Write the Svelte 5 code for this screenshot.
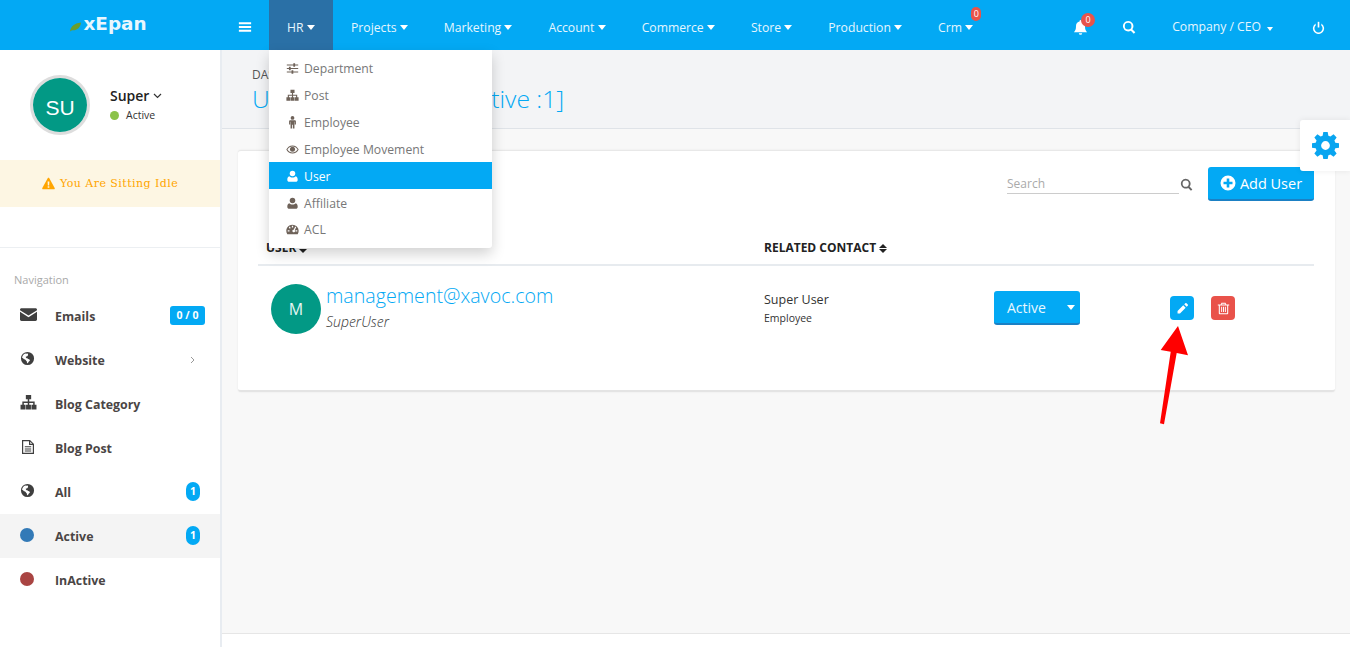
<script>
	const navItems = [
		{ label: 'HR', open: true },
		{ label: 'Projects' },
		{ label: 'Marketing' },
		{ label: 'Account' },
		{ label: 'Commerce' },
		{ label: 'Store' },
		{ label: 'Production' },
		{ label: 'Crm', badge: '0' }
	];

	const hrMenu = [
		{ label: 'Department', icon: 'sliders' },
		{ label: 'Post', icon: 'sitemap' },
		{ label: 'Employee', icon: 'male' },
		{ label: 'Employee Movement', icon: 'eye' },
		{ label: 'User', icon: 'user', active: true },
		{ label: 'Affiliate', icon: 'user' },
		{ label: 'ACL', icon: 'dashboard' }
	];

	const sideItems = [
		{ label: 'Emails', icon: 'mail', size: 17, pill: '0 / 0' },
		{ label: 'Website', icon: 'globe', size: 15, chevron: true },
		{ label: 'Blog Category', icon: 'sitemap', size: 17 },
		{ label: 'Blog Post', icon: 'file', size: 16 },
		{ label: 'All', icon: 'globe', size: 15, count: 1 },
		{ label: 'Active', dot: '#337ab7', count: 1, current: true },
		{ label: 'InActive', dot: '#a94442' }
	];
</script>

{#snippet icon(name, size = 14)}
	<svg class="ico" width={size} height={size} viewBox="0 0 16 16" fill="currentColor" aria-hidden="true">
		{#if name === 'sliders'}
			<path d="M1 3h14v1.400H1zM1 7.300h14v1.400H1zM1 11.600h14V13H1z" />
			<path d="M9 1.600h2.200v4.200H9zM3.600 5.900h2.200v4.200H3.600zM6.800 10.200H9v4.200H6.800z" />
		{:else if name === 'sitemap'}
			<path d="M5.500 1h5v4H8.700v2h5.100v3.200h1.700v4.300H10.800v-4.300h1.600V8.400H8.700v1.800h1.600v4.300H5.700v-4.300h1.600V8.400H3.600v1.800h1.600v4.300H.5v-4.300h1.700V7h5.100V5H5.500z" />
		{:else if name === 'male'}
			<circle cx="8" cy="2.400" r="2.300" />
			<path d="M5.300 5.200h5.400c.9 0 1.500.6 1.500 1.400v4h-1.400V7.200h-.4V15.500H8.500V10.800h-1V15.500H5.600V7.200h-.4v3.400H3.800v-4c0-.8.6-1.400 1.500-1.400z" />
		{:else if name === 'eye'}
			<path fill-rule="evenodd" d="M8 3c3.400 0 6 2 7.600 5-1.600 3-4.200 5-7.600 5S2 11 .4 8C2 5 4.600 3 8 3zm0 1.200C5.400 4.200 3.200 5.700 1.800 8c1.400 2.300 3.600 3.800 6.200 3.800s4.800-1.500 6.200-3.800C12.800 5.700 10.600 4.200 8 4.200z" />
			<circle cx="8" cy="7.600" r="3.100" />
		{:else if name === 'user'}
			<circle cx="8" cy="4.400" r="3.400" />
			<path d="M4 7.700c1 1 2.400 1.500 4 1.500s3-.5 4-1.500c1.600.3 2.400 2 2.400 4.300 0 1.700-1 2.500-2.400 2.500H4c-1.400 0-2.400-.8-2.400-2.500 0-2.300.8-4 2.400-4.300z" />
		{:else if name === 'dashboard'}
			<path fill-rule="evenodd" d="M8 2a7.600 7.600 0 0 1 7.600 7.600c0 1.500-.4 2.900-1.200 4.100H1.600A7.600 7.600 0 0 1 8 2zM7.200 3.400v2.200h1.600V3.400zM3.500 5.200 4.600 7l1.200-.9-1.200-1.700zm9 0-1.100-.8-1.900 3.800a1.600 1.600 0 1 0 1.300.7zM2.100 9v1.500h2.200V9zm9.600 0v1.500h2.200V9z" />
		{:else if name === 'mail'}
			<path d="M0 3.400C0 2.600.6 2 1.400 2h13.200c.8 0 1.400.6 1.400 1.400v.5L8 9 0 3.900z" />
			<path d="M0 5.500v7.100c0 .8.6 1.400 1.400 1.400h13.200c.8 0 1.400-.6 1.400-1.400V5.500L8 10.600z" />
		{:else if name === 'globe'}
			<path fill-rule="evenodd" d="M8 1a7 7 0 1 1 0 14A7 7 0 0 1 8 1zM5.400 2.700C3.600 3.600 2.400 5.300 2.200 7.300c.8.300 1.400.8 2 1.400.7.200 1.600.2 1.800 1 .2.700.8 1 1.300 1.500.3.500 0 1.400.2 2 .9-.2 1.500-1.200 2-2 .4-.4 1-.7 1-1.400 0-.7-.9-.8-1.500-1.200-.6-.3-1.200-1.100-2-.9-.6-.5-1-1-.7-1.800.6-.2 1.300-.3 1.800-.7.2-.6.8-1.300.4-2.100-.3-.4-1.100-.5-1.500-.3z" />
		{:else if name === 'file'}
			<path fill-rule="evenodd" d="M2 1h8l4 4v10H2zM3.200 2.200v11.600h9.600V6H9V2.200zM10.200 2.700v2.100h2.100zM4.800 7.200h6.400v1H4.800zm0 2.200h6.400v1H4.800zm0 2.200h6.400v1H4.800z" />
		{:else if name === 'search'}
			<path fill-rule="evenodd" d="M7 1a6 6 0 0 1 4.800 9.600l3.400 3.400-1.700 1.700-3.400-3.500A6 6 0 1 1 7 1zm0 2.200a3.800 3.800 0 1 0 0 7.600 3.800 3.800 0 0 0 0-7.600z" />
		{:else if name === 'bell'}
			<path d="M8 0c.6 0 1 .4 1 1v.7c2.300.4 3.800 2.300 3.800 4.700 0 3.500.7 5 2.200 6.600H1c1.500-1.600 2.200-3.100 2.200-6.600C3.200 4 4.700 2.100 7 1.700V1c0-.6.4-1 1-1zM6.200 14h3.600a1.800 1.800 0 0 1-3.600 0z" />
		{:else if name === 'power'}
			<path d="M7 1h2v7H7z" />
			<path d="M4.500 3.200v2.300a5 5 0 1 0 7 0V3.200a6.900 6.900 0 1 1-7 0z" />
		{:else if name === 'bars'}
			<path d="M1 2.500h14v2.400H1zM1 6.800h14v2.400H1zM1 11.100h14v2.400H1z" />
		{:else if name === 'warning'}
			<path fill-rule="evenodd" d="M8 1c.4 0 .8.200 1 .6l6.600 11.800c.4.800-.1 1.600-1 1.600H1.400c-.9 0-1.400-.8-1-1.600L7 1.600c.2-.4.600-.6 1-.6zM6.900 5.400l.3 5h1.600l.3-5zM7 11.400v1.800h2v-1.800z" />
		{:else if name === 'plus'}
			<path fill-rule="evenodd" d="M8 .5a7.500 7.500 0 1 1 0 15 7.500 7.500 0 0 1 0-15zM6.700 3.500v3.200H3.500v2.600h3.200v3.200h2.600V9.300h3.200V6.700H9.300V3.500z" />
		{:else if name === 'pencil'}
			<path d="M11.500 1.500c.4-.4 1-.4 1.400 0l1.600 1.600c.4.400.4 1 0 1.400l-1.400 1.400-3-3zM8.900 4.100l3 3-7 7H1.900v-3z" />
		{:else if name === 'trash'}
			<path fill-rule="evenodd" d="M5.500 1h5l.9 2H15v1.300h-1.200V14c0 .6-.5 1-1 1H3.200c-.5 0-1-.4-1-1V4.300H1V3h3.600zM6.100 2.200 5.800 3h4.400l-.3-.8zM3.500 4.300v9.400h9V4.300zM5.100 5.800h1.200v6.400H5.100zm2.300 0h1.200v6.400H7.400zm2.300 0h1.200v6.400H9.700z" />
		{:else if name === 'gear'}
			<path fill-rule="evenodd" d="M6.700 0h2.600l.4 2.200 1.200.5L12.800 1.400l1.800 1.800-1.300 1.900.5 1.200 2.200.4v2.600l-2.200.4-.5 1.200 1.300 1.900-1.800 1.800-1.900-1.300-1.200.5-.4 2.200H6.700l-.4-2.200-1.200-.5-1.900 1.300-1.800-1.800 1.300-1.900-.5-1.200L0 9.300V6.700l2.200-.4.500-1.200L1.400 3.200l1.800-1.800 1.900 1.300 1.200-.5zM8 5.400a2.600 2.600 0 1 0 0 5.200 2.600 2.600 0 0 0 0-5.200z" />
		{/if}
	</svg>
{/snippet}

<div class="page">
	<header class="topbar">
		<div class="logo">
			<svg class="leaf" width="13" height="10" viewBox="0 0 13 11" aria-hidden="true">
				<path d="M.5 10.500C1 5 5 1.500 12.500.5 12 6 8 9.500 3 9 2 9.300 1.200 9.900.5 10.500z" fill="#6a9e2c" />
			</svg>
			<span>xEpan</span>
		</div>
		<button class="burger">{@render icon('bars', 14)}</button>
		<nav class="mainnav">
			{#each navItems as item}
				<div class="navitem" class:open={item.open}>
					{item.label}<span class="caret"></span>
					{#if item.badge}<span class="crm-badge">{item.badge}</span>{/if}
					{#if item.open}
						<div class="dropdown">
							{#each hrMenu as m}
								<div class="dd-row" class:active={m.active}>
									<span class="dd-icon">{@render icon(m.icon, 13)}</span>
									{m.label}
								</div>
							{/each}
						</div>
					{/if}
				</div>
			{/each}
		</nav>
		<div class="topright">
			<div class="bell">{@render icon('bell', 15)}<span class="bell-badge">0</span></div>
			<div class="tsearch">{@render icon('search', 14)}</div>
			<div class="company">Company / CEO<span class="caret small"></span></div>
			<div class="power">{@render icon('power', 13)}</div>
		</div>
	</header>

	<div class="body">
		<aside class="sidebar">
			<div class="profile">
				<div class="avatar-ring"><div class="avatar">SU</div></div>
				<div class="who">
					<div class="name">
						Super
						<svg width="9" height="6" viewBox="0 0 9 6" fill="none" stroke="#333" stroke-width="1.2"><path d="M1 1l3.500 3.500L8 1" /></svg>
					</div>
					<div class="status"><span class="green"></span>Active</div>
				</div>
			</div>
			<div class="idle">{@render icon('warning', 13)}<span>You Are Sitting Idle</span></div>
			<div class="side-list">
				<div class="side-title">Navigation</div>
				{#each sideItems as s}
					<div class="side-row" class:current={s.current}>
						<span class="side-icon">
							{#if s.dot}
								<span class="dot" style="background:{s.dot}"></span>
							{:else}
								{@render icon(s.icon, s.size)}
							{/if}
						</span>
						<span class="side-label">{s.label}</span>
						{#if s.pill}<span class="pill">{s.pill}</span>{/if}
						{#if s.count}<span class="count">{s.count}</span>{/if}
						{#if s.chevron}
							<svg class="chev" width="5" height="8" viewBox="0 0 5 8" fill="none" stroke="#999" stroke-width="1"><path d="M1 1l3 3-3 3" /></svg>
						{/if}
					</div>
				{/each}
			</div>
		</aside>

		<main class="main">
			<div class="pagehead">
				<div class="crumb">DASHBOARD</div>
				<h1>Users [All Users :1, Active :1]</h1>
			</div>
			<div class="content">
				<section class="card">
					<div class="tools">
						<div class="searchbox">
							<span class="search-field">Search</span>
							<span class="search-ico">{@render icon('search', 13)}</span>
						</div>
						<button class="add">{@render icon('plus', 16)}Add User</button>
					</div>
					<div class="thead">
						<div>User<span class="sort"></span></div>
						<div>Related Contact<span class="sort"></span></div>
					</div>
					<div class="trow">
						<div class="usercell">
							<div class="m-avatar">M</div>
							<div>
								<div class="email">management@xavoc.com</div>
								<div class="uname">SuperUser</div>
							</div>
						</div>
						<div class="contact">
							<div class="c-name">Super User</div>
							<div class="c-role">Employee</div>
						</div>
						<div class="statuscell">
							<div class="split"><span>Active</span><span class="caret"></span></div>
						</div>
						<div class="actions">
							<button class="act edit">{@render icon('pencil', 13)}</button>
							<button class="act del">{@render icon('trash', 13)}</button>
						</div>
					</div>
				</section>
			</div>
			<div class="foot"></div>
		</main>
	</div>

	<div class="settings">{@render icon('gear', 27)}</div>

	<svg class="annot" width="40" height="110" viewBox="0 0 40 110" aria-hidden="true">
		<path d="M23 1 33 30.300 21.700 28 9 99.300 5 98.300 15.700 26.700 5.700 25z" fill="#f00" />
	</svg>
</div>

<style>
	:global(body) {
		margin: 0;
		font-family: 'Open Sans', sans-serif;
		color: #333;
	}
	.page {
		position: relative;
		height: 647px;
		overflow: hidden;
		display: flex;
		flex-direction: column;
	}
	.ico {
		display: block;
		flex: none;
	}
	button {
		font-family: inherit;
		border: none;
		padding: 0;
		cursor: pointer;
	}

	.topbar {
		height: 50px;
		flex: none;
		background: #03a9f4;
		color: #fff;
		display: flex;
		align-items: center;
		font-size: 12.2px;
		position: relative;
		z-index: 3;
	}
	.logo {
		width: 220px;
		flex: none;
		display: flex;
		align-items: center;
		justify-content: center;
		box-sizing: border-box;
		padding-right: 4px;
		font-family: 'DejaVu Sans', sans-serif;
		font-weight: 700;
		font-size: 18.4px;
		color: #e9f7fe;
		margin-top: -3px;
	}
	.leaf {
		margin: 6px 1px 0 0;
	}
	.burger {
		background: none;
		color: #fff;
		width: 49px;
		display: flex;
		justify-content: center;
		margin-top: 4px;
	}
	.mainnav {
		display: flex;
		height: 100%;
	}
	.navitem {
		position: relative;
		display: flex;
		align-items: center;
		box-sizing: border-box;
		padding: 4px 18px 0;
		height: 100%;
		color: #e6f6fe;
	}
	.navitem.open {
		background: #2a70a6;
		min-width: 64px;
	}
	.caret {
		display: inline-block;
		width: 0;
		height: 0;
		margin-left: 3.2px;
		border-left: 4px solid transparent;
		border-right: 4px solid transparent;
		border-top: 5px solid #fff;
	}
	.caret.small {
		margin-left: 6px;
		border-left-width: 3.5px;
		border-right-width: 3.5px;
		border-top-width: 4px;
	}
	.crm-badge {
		position: absolute;
		top: 7px;
		right: 10px;
		width: 10px;
		height: 14px;
		border-radius: 5px;
		background: #e8534a;
		font-size: 9px;
		line-height: 14px;
		text-align: center;
		color: #fff;
	}
	.dropdown {
		position: absolute;
		left: 0;
		top: 50px;
		width: 223px;
		padding: 4px 0 0;
		height: 198px;
		box-sizing: border-box;
		background: #fff;
		border-radius: 0 0 3px 3px;
		box-shadow: 0 6px 14px rgba(0, 0, 0, 0.18);
		color: #777;
	}
	.dd-row {
		height: 27px;
		box-sizing: border-box;
		padding: 1px 0 0 17px;
		display: flex;
		align-items: center;
		font-size: 12.2px;
	}
	.dd-row:last-child {
		padding-top: 0;
	}
	.dd-icon {
		width: 18px;
		color: #6e6259;
	}
	.dd-row.active {
		background: #03a9f4;
		color: #fff;
	}
	.dd-row.active .dd-icon {
		color: #fff;
	}
	.topright {
		margin-left: auto;
		display: flex;
		align-items: center;
		box-sizing: border-box;
		padding-top: 4px;
		height: 100%;
	}
	.bell {
		position: relative;
		margin-right: 34px;
	}
	.bell-badge {
		position: absolute;
		top: -7px;
		left: 8px;
		width: 14px;
		height: 14px;
		border-radius: 7px;
		background: #e8534a;
		font-size: 9px;
		line-height: 14px;
		text-align: center;
	}
	.tsearch {
		margin-right: 36px;
	}
	.company {
		margin-right: 39px;
		color: #e6f6fe;
		margin-top: -2px;
	}
	.power {
		margin-right: 25px;
	}

	.body {
		flex: 1;
		display: flex;
		min-height: 0;
	}
	.sidebar {
		width: 220px;
		flex: none;
		background: #fff;
		border-right: 2px solid #e8ecf1;
	}
	.profile {
		height: 110px;
		display: flex;
		align-items: flex-start;
		padding: 25px 0 0 30px;
		box-sizing: border-box;
	}
	.avatar-ring {
		width: 60px;
		height: 60px;
		box-sizing: border-box;
		border: 3px solid #ddd;
		border-radius: 50%;
	}
	.avatar {
		height: 100%;
		box-sizing: border-box;
		padding-top: 5px;
		border-radius: 50%;
		background: #029985;
		color: #fff;
		font-family: 'Liberation Sans', sans-serif;
		font-size: 21px;
		display: flex;
		align-items: center;
		justify-content: center;
	}
	.who {
		margin: 11px 0 0 20px;
	}
	.name {
		font-size: 14px;
		font-weight: 600;
		color: #222;
		line-height: 20px;
		display: flex;
		align-items: center;
		gap: 4px;
	}
	.status {
		display: flex;
		align-items: center;
		font-size: 10.5px;
		color: #333;
		line-height: 18px;
	}
	.green {
		width: 9px;
		height: 9px;
		border-radius: 50%;
		background: #8bc34a;
		margin-right: 7px;
	}
	.idle {
		height: 47px;
		background: #fdf6e3;
		display: flex;
		align-items: center;
		padding-left: 42px;
		gap: 5px;
		color: #ffa500;
		font-family: 'DejaVu Serif', serif;
		font-size: 11px;
		letter-spacing: 0.45px;
	}
	.side-list {
		margin-top: 40px;
		border-top: 1px solid #eceff2;
		padding-top: 22px;
	}
	.side-title {
		font-size: 11px;
		color: #a9a9a9;
		padding-left: 14px;
		line-height: 20px;
		margin-bottom: 4px;
	}
	.side-row {
		height: 44px;
		display: flex;
		align-items: center;
		padding-left: 20px;
		position: relative;
	}
	.side-row.current {
		background: #f4f4f4;
	}
	.side-icon {
		width: 35px;
		color: #3f3f3f;
		display: flex;
		margin-top: -3px;
	}
	.dot {
		width: 14px;
		height: 14px;
		border-radius: 50%;
	}
	.side-label {
		font-size: 12.4px;
		font-weight: 700;
		color: #4a4545;
	}
	.pill {
		position: absolute;
		right: 15px;
		top: 12px;
		width: 35px;
		height: 19px;
		border-radius: 3px;
		background: #03a9f4;
		color: #fff;
		font-size: 10.5px;
		font-weight: 700;
		line-height: 19px;
		text-align: center;
	}
	.count {
		position: absolute;
		right: 20px;
		top: 12px;
		width: 14px;
		height: 19px;
		border-radius: 7px;
		background: #03a9f4;
		color: #fff;
		font-size: 10.5px;
		font-weight: 700;
		line-height: 19px;
		text-align: center;
	}
	.chev {
		position: absolute;
		left: 190px;
		top: 18px;
	}

	.main {
		flex: 1;
		min-width: 0;
		display: flex;
		flex-direction: column;
		background: #f8f8f8;
	}
	.pagehead {
		height: 79px;
		box-sizing: border-box;
		background: #f3f4f6;
		border-bottom: 1px solid #dfe3e8;
		padding: 18px 0 0 30px;
	}
	.crumb {
		font-size: 12px;
		color: #555;
		line-height: 14px;
	}
	h1 {
		margin: 0;
		font-size: 24.7px;
		font-weight: 300;
		color: #03a9f4;
		line-height: 33px;
	}
	.content {
		flex: 1;
		padding: 21px 15px 0 16px;
	}
	.card {
		height: 242px;
		box-sizing: border-box;
		background: #fff;
		border-radius: 3px;
		border-top: 1px solid #e8e8e8;
		border-bottom: 2px solid #e4e4e4;
		box-shadow: 0 0 2px rgba(0, 0, 0, 0.08);
		padding: 16px 21px 0 20px;
		display: flex;
		flex-direction: column;
	}
	.tools {
		display: flex;
		justify-content: flex-end;
		align-items: flex-start;
	}
	.searchbox {
		display: flex;
		align-items: center;
		margin-top: 8px;
	}
	.search-field {
		width: 172px;
		height: 18px;
		line-height: 17px;
		border-bottom: 1px solid #ccc;
		color: #aaa;
		font-size: 12px;
	}
	.search-ico {
		color: #666;
		margin: 0 15px 0 1px;
	}
	.add {
		width: 106px;
		height: 34px;
		box-sizing: border-box;
		background: #03a9f4;
		border-bottom: 2px solid #1b80c4;
		border-radius: 3px;
		color: #fff;
		font-size: 14.5px;
		display: flex;
		align-items: center;
		justify-content: center;
		gap: 4px;
	}
	.thead {
		margin-top: 27px;
		height: 38px;
		box-sizing: border-box;
		border-bottom: 2px solid #e7ebef;
		display: grid;
		grid-template-columns: 498px 1fr;
		font-size: 12px;
		font-weight: 700;
		text-transform: uppercase;
		color: #222;
		line-height: 24px;
		padding: 8px 0 0 8px;
	}
	.sort {
		display: inline-block;
		margin-left: 3px;
		width: 0;
		height: 0;
		border-left: 4px solid transparent;
		border-right: 4px solid transparent;
		border-top: 4px solid #222;
		vertical-align: -1px;
		position: relative;
	}
	.sort::before {
		content: '';
		position: absolute;
		left: -4px;
		top: -9px;
		border-left: 4px solid transparent;
		border-right: 4px solid transparent;
		border-bottom: 4px solid #222;
	}
	.trow {
		display: grid;
		grid-template-columns: 506px 230px 176px 1fr;
		align-items: start;
	}
	.usercell {
		display: flex;
		padding: 18px 0 0 13px;
		gap: 5px;
	}
	.m-avatar {
		width: 50px;
		height: 50px;
		border-radius: 50%;
		background: #029985;
		color: #e6f6f3;
		font-size: 16px;
		display: flex;
		align-items: center;
		justify-content: center;
	}
	.email {
		font-size: 19.65px;
		font-weight: 300;
		color: #03a9f4;
		line-height: 28px;
		margin-top: -2px;
	}
	.uname {
		font-size: 14px;
		font-style: italic;
		font-weight: 300;
		color: #333;
		line-height: 20px;
		margin-top: 2px;
	}
	.contact {
		padding-top: 25px;
	}
	.c-name {
		font-size: 12.5px;
		color: #333;
		line-height: 18px;
	}
	.c-role {
		font-size: 10.5px;
		color: #333;
		line-height: 18px;
		margin-top: 0;
	}
	.statuscell {
		padding-top: 25px;
	}
	.split {
		width: 86px;
		height: 34px;
		box-sizing: border-box;
		background: #03a9f4;
		border-bottom: 2px solid #1b80c4;
		border-radius: 3px;
		color: #e8f7fe;
		font-size: 14px;
		display: flex;
		align-items: center;
		justify-content: space-between;
		padding: 0 5px 0 13px;
	}
	.actions {
		display: flex;
		gap: 17px;
		padding-top: 30px;
	}
	.act {
		width: 24px;
		height: 24px;
		border-radius: 4px;
		display: flex;
		align-items: center;
		justify-content: center;
		color: #fff;
	}
	.edit {
		background: #03a9f4;
	}
	.del {
		background: #e9524a;
	}
	.foot {
		height: 13px;
		background: #fff;
		border-top: 1px solid #e6e6e6;
	}
	.settings {
		position: absolute;
		right: 0;
		top: 120px;
		width: 50px;
		height: 51px;
		background: #fff;
		border-radius: 3px 0 0 3px;
		box-shadow: 0 0 6px rgba(0, 0, 0, 0.08);
		display: flex;
		align-items: center;
		justify-content: center;
		color: #09a5f0;
		z-index: 2;
	}
	.annot {
		position: absolute;
		left: 1155px;
		top: 325px;
	}
</style>
